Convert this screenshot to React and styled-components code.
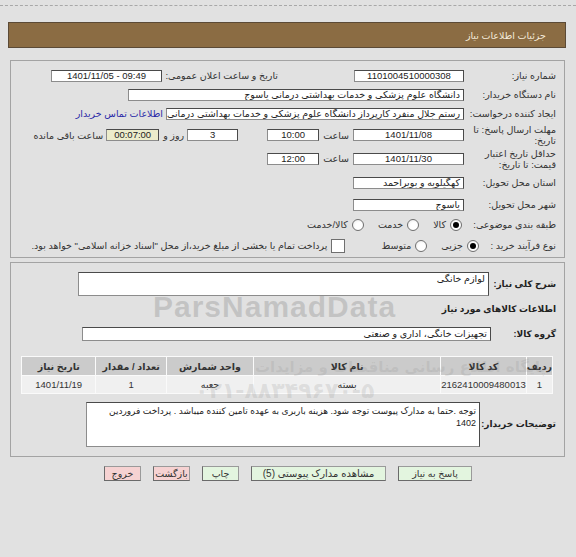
import React from 'react';
import styled, { createGlobalStyle } from 'styled-components';

const GlobalStyle = createGlobalStyle`
* {
  box-sizing: border-box;
}
body {
  margin: 0;
  background: #e1e1e1;
  font-family: "Liberation Sans", "DejaVu Sans", sans-serif;
  font-size: 9.5px;
  color: #333;
}
`;

const Page = styled.div`
position: relative;
width: 576px;
min-height: 557px;
direction: rtl;
padding-top: 5px;
overflow: hidden;
`;

const TopRule = styled.div`
border-top: 1px dashed #a8a8a8;
`;

const Header = styled.div`
margin: 16px 10px 0 8px;
height: 26px;
background: #8b6c43;
border: 1px solid #5b4a36;
color: #f3ead9;
display: flex;
align-items: center;
padding-right: 19px;
font-size: 9.5px;
`;

const Panel = styled.div`
margin: ${p => p.$mt}px 11px 0 10px;
border: 1px solid #a3a3a3;
padding: ${p => p.$pt}px 8px ${p => p.$pb}px 0;
`;

const Row = styled.div`
display: flex;
align-items: center;
height: ${p => p.$h}px;
white-space: nowrap;
`;

const Label = styled.div`
flex: none;
width: ${p => p.$w || 92}px;
text-align: right;
line-height: 11px;
white-space: ${p => (p.$nowrap ? 'nowrap' : 'normal')};
font-weight: ${p => (p.$bold ? 'bold' : 'normal')};
font-size: ${p => (p.$bold ? '9px' : 'inherit')};
color: ${p => (p.$bold ? '#222' : '#333')};
`;

const Box = styled.div`
flex: none;
width: ${p => p.$w}px;
height: ${p => p.$h || 12}px;
margin-right: ${p => p.$mr || 0}px;
background: ${p => p.$bg || '#fff'};
border: 1px solid #8c8c8c;
border-top-color: #4a4a4a;
border-right-color: #4a4a4a;
padding: 0 3px;
direction: ${p => (p.$ltr ? 'ltr' : 'rtl')};
font-size: ${p => p.$fs || 9.5}px;
line-height: ${p => (p.$h ? 12 : 10)}px;
text-align: ${p => p.$align || 'center'};
overflow: hidden;
white-space: ${p => (p.$wrap ? 'normal' : 'nowrap')};
color: #222;
`;

const Text = styled.span`
flex: none;
margin-right: ${p => p.$mr || 0}px;
color: ${p => p.$color || '#333'};
`;

const Radio = styled.span`
flex: none;
width: 12px;
height: 12px;
margin-right: ${p => p.$mr || 0}px;
margin-left: 4px;
border-radius: 50%;
border: 1px solid #6f6f6f;
background: radial-gradient(circle at 60% 60%, #fff 40%, #e6e6e6);
display: inline-flex;
align-items: center;
justify-content: center;
&::after {
  content: '';
  width: 6px;
  height: 6px;
  border-radius: 50%;
  background: ${p => (p.$checked ? '#000' : 'transparent')};
}
`;

const Check = styled.span`
flex: none;
width: 14px;
height: 14px;
margin-right: ${p => p.$mr || 0}px;
margin-left: 4px;
border: 1px solid #6f6f6f;
background: #fff;
`;

const Table = styled.table`
margin: ${p => p.$mt}px 3px 0 0;
width: 532px;
border-collapse: separate;
border-spacing: 1px;
background: #fafafa;
font-size: 9.5px;
`;

const Th = styled.th`
width: ${p => p.$w}px;
height: 18px;
padding: 0;
background: #cbcbcb;
color: #333;
font-weight: bold;
`;

const Td = styled.td`
height: 17px;
padding: 0;
text-align: center;
background: #f0f0f0;
color: #333;
`;

const Buttons = styled.div`
display: flex;
gap: 12px;
margin: 9px 104px 0 0;
`;

const Button = styled.div`
flex: none;
width: ${p => p.$w}px;
height: 15px;
line-height: 13px;
text-align: center;
font-size: ${p => p.$fs || 9.5}px;
background: ${p => (p.$red ? '#f6d2d2' : '#e3f5df')};
border: 1px solid #6a6a6a;
border-top-color: #9a9a9a;
border-right-color: #9a9a9a;
color: #333;
`;

const Watermark = styled.div`
position: absolute;
left: ${p => p.$x}px;
top: ${p => p.$y}px;
direction: ltr;
font-family: ${p => (p.$fa ? '"DejaVu Sans", sans-serif' : '"Liberation Sans", sans-serif')};
font-size: ${p => p.$fs}px;
font-weight: bold;
letter-spacing: ${p => p.$ls || 0}px;
color: rgba(140, 140, 140, ${p => p.$o});
pointer-events: none;
white-space: nowrap;
`;

export default function App() {
  return (
    <Page>
      <GlobalStyle />
      <TopRule />
      <Header>جزئیات اطلاعات نیاز</Header>

      <Panel $mt={12} $pt={5} $pb={1}>
        <Row $h={19}>
          <Label>شماره نیاز:</Label>
          <Box $w={110}>1101004510000308</Box>
          <Label $w={112} $nowrap style={{ marginRight: 76 }}>تاریخ و ساعت اعلان عمومی:</Label>
          <Box $w={111} $mr={4} $ltr>1401/11/05 - 09:49</Box>
        </Row>
        <Row $h={19}>
          <Label>نام دستگاه خریدار:</Label>
          <Box $w={336} $align="right">دانشگاه علوم پزشکی و خدمات بهداشتی  درمانی یاسوج</Box>
        </Row>
        <Row $h={19}>
          <Label>ایجاد کننده درخواست:</Label>
          <Box $w={298} $align="right">رستم جلال منفرد کارپرداز دانشگاه علوم پزشکی و خدمات بهداشتی  درمانی یاسوج</Box>
          <Text $mr={3} $color="#2a2aa8">اطلاعات تماس خریدار</Text>
        </Row>
        <Row $h={24}>
          <Label>مهلت ارسال پاسخ: تا تاریخ:</Label>
          <Box $w={111}>1401/11/08</Box>
          <Text $mr={4}>ساعت</Text>
          <Box $w={52} $mr={4}>10:00</Box>
          <Box $w={51} $mr={29}>3</Box>
          <Text $mr={3}>روز و</Text>
          <Box $w={53} $mr={4} $bg="#ececcb">00:07:00</Box>
          <Text $mr={3}>ساعت باقی مانده</Text>
        </Row>
        <Row $h={23}>
          <Label>حداقل تاریخ اعتبار قیمت: تا تاریخ:</Label>
          <Box $w={111}>1401/11/30</Box>
          <Text $mr={4}>ساعت</Text>
          <Box $w={52} $mr={4}>12:00</Box>
        </Row>
        <Row $h={25}>
          <Label>استان محل تحویل:</Label>
          <Box $w={111} $align="right">کهگیلویه و بویراحمد</Box>
        </Row>
        <Row $h={19}>
          <Label>شهر محل تحویل:</Label>
          <Box $w={111} $align="right">یاسوج</Box>
        </Row>
        <Row $h={21}>
          <Label>طبقه بندی موضوعی:</Label>
          <Radio $checked $mr={2} />
          <Text>کالا</Text>
          <Radio $mr={14} />
          <Text>خدمت</Text>
          <Radio $mr={14} />
          <Text>کالا/خدمت</Text>
        </Row>
        <Row $h={21}>
          <Label $w={77}>نوع فرآیند خرید :</Label>
          <Radio $checked />
          <Text>جزیی</Text>
          <Radio $mr={14} />
          <Text>متوسط</Text>
          <Check $mr={36} />
          <Text>پرداخت تمام یا بخشی از مبلغ خرید،از محل "اسناد خزانه اسلامی" خواهد بود.</Text>
        </Row>
      </Panel>

      <Panel $mt={4} $pt={9} $pb={9}>
        <Row $h={24}>
          <Label $bold $nowrap $w={67}>شرح کلی نیاز:</Label>
          <Box $w={411} $h={24} $align="right" style={{ alignSelf: 'stretch' }}>لوازم خانگی</Box>
        </Row>
        <Row $h={26}>
          <Label $bold $nowrap $w={200}>اطلاعات کالاهای مورد نیاز</Label>
        </Row>
        <Row $h={14} style={{ marginTop: 5 }}>
          <Label $bold $nowrap $w={65}>گروه کالا:</Label>
          <Box $w={409} $h={14} $align="right">تجهیزات خانگی، اداری و صنعتی</Box>
        </Row>
        <Table $mt={15}>
          <thead>
            <tr>
              <Th $w={20}>ردیف</Th>
              <Th $w={76}>کد کالا</Th>
              <Th $w={196}>نام کالا</Th>
              <Th $w={89}>واحد شمارش</Th>
              <Th $w={72}>تعداد / مقدار</Th>
              <Th $w={75}>تاریخ نیاز</Th>
            </tr>
          </thead>
          <tbody>
            <tr>
              <Td>1</Td>
              <Td>2162410009480013</Td>
              <Td>بسته</Td>
              <Td>جعبه</Td>
              <Td>1</Td>
              <Td>1401/11/19</Td>
            </tr>
          </tbody>
        </Table>
        <Row $h={45} style={{ marginTop: 8 }}>
          <Label $bold $nowrap $w={76}>توضیحات خریدار:</Label>
          <Box $w={394} $h={45} $fs={9} $align="right" $wrap style={{ alignSelf: 'stretch', paddingTop: 2 }}>
            توجه .حتما به مدارک پیوست توجه شود. هزینه باربری به عهده تامین کننده میباشد . پرداخت فروردین
            <br />
            1402
          </Box>
        </Row>
      </Panel>

      <Buttons>
        <Button $w={74}>پاسخ به نیاز</Button>
        <Button $w={135} $fs={10}>مشاهده مدارک پیوستی (5)</Button>
        <Button $w={37}>چاپ</Button>
        <Button $w={37} $red>بازگشت</Button>
        <Button $w={37} $red>خروج</Button>
      </Buttons>

      <Watermark $x={153} $y={290} $fs={30} $ls={1} $o={0.35}>ParsNamadData</Watermark>
      <Watermark $x={255} $y={358} $fs={15} $o={0.2} $fa>پایگاه اطلاع رسانی مناقصات و مزایدات</Watermark>
      <Watermark $x={195} $y={378} $fs={22} $o={0.2} $fa>۰۲۱-۸۸۳۴۹۶۷۰-۵</Watermark>
    </Page>
  );
}
